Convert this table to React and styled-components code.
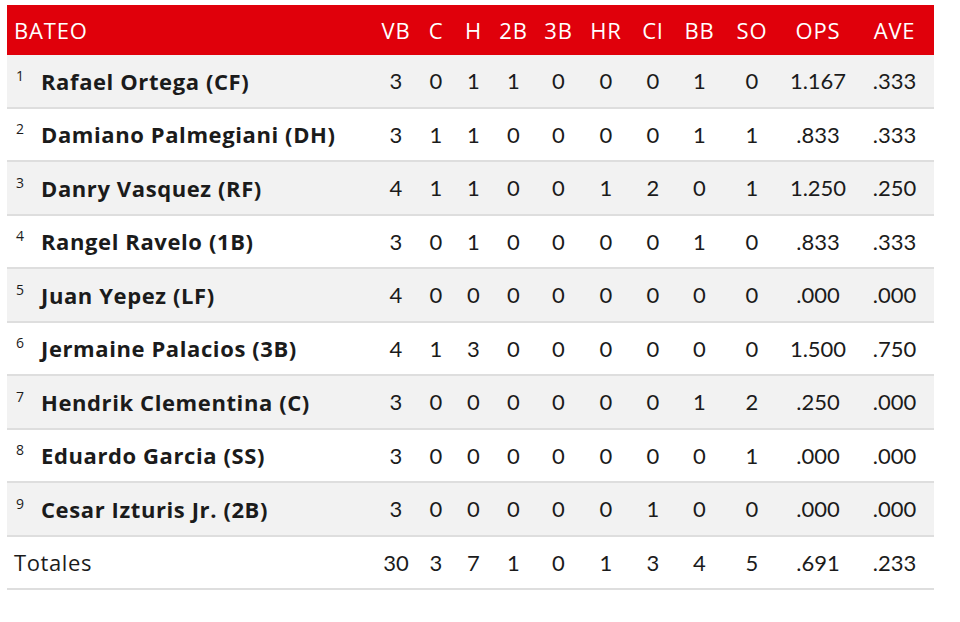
import React from "react";
import styled, { createGlobalStyle } from "styled-components";

const GlobalStyle = createGlobalStyle`
  body {
    margin: 0;
    background: #fff;
    font-family: "Open Sans", "Noto Sans", sans-serif;
    color: #1b1b1b;
  }
`

const COLS = "368px 42px 38px 37px 43px 47px 48px 46px 47px 58px 74px 79px";

const headers = ["VB", "C", "H", "2B", "3B", "HR", "CI", "BB", "SO", "OPS", "AVE"];

const players = [
  { n: 1, name: "Rafael Ortega (CF)", s: ["3", "0", "1", "1", "0", "0", "0", "1", "0", "1.167", ".333"] },
  { n: 2, name: "Damiano Palmegiani (DH)", s: ["3", "1", "1", "0", "0", "0", "0", "1", "1", ".833", ".333"] },
  { n: 3, name: "Danry Vasquez (RF)", s: ["4", "1", "1", "0", "0", "1", "2", "0", "1", "1.250", ".250"] },
  { n: 4, name: "Rangel Ravelo (1B)", s: ["3", "0", "1", "0", "0", "0", "0", "1", "0", ".833", ".333"] },
  { n: 5, name: "Juan Yepez (LF)", s: ["4", "0", "0", "0", "0", "0", "0", "0", "0", ".000", ".000"] },
  { n: 6, name: "Jermaine Palacios (3B)", s: ["4", "1", "3", "0", "0", "0", "0", "0", "0", "1.500", ".750"] },
  { n: 7, name: "Hendrik Clementina (C)", s: ["3", "0", "0", "0", "0", "0", "0", "1", "2", ".250", ".000"] },
  { n: 8, name: "Eduardo Garcia (SS)", s: ["3", "0", "0", "0", "0", "0", "0", "0", "1", ".000", ".000"] },
  { n: 9, name: "Cesar Izturis Jr. (2B)", s: ["3", "0", "0", "0", "0", "0", "1", "0", "0", ".000", ".000"] },
];

const totals = ["30", "3", "7", "1", "0", "1", "3", "4", "5", ".691", ".233"];

const App = () => {
  return (
    <>
      <GlobalStyle />
      <StyledTable>
        <HeaderRow>
          <HeaderName>BATEO</HeaderName>
          {headers.map((h) => (
            <HeaderCell key={h}>{h}</HeaderCell>
          ))}
        </HeaderRow>
        {players.map((p) => (
          <Row key={p.n} $alt={p.n % 2 === 1}>
            <NameCell>
              <Order>{p.n}</Order>
              <Name>{p.name}</Name>
            </NameCell>
            {p.s.map((v, i) => (
              <Cell key={i}>{v}</Cell>
            ))}
          </Row>
        ))}
        <Row>
          <TotalLabel>Totales</TotalLabel>
          {totals.map((v, i) => (
            <Cell key={i}>{v}</Cell>
          ))}
        </Row>
      </StyledTable>
    </>
  )
}

const StyledTable = styled.div`
  width: 927px;
  margin: 5px 0 0 7px;
`
const HeaderRow = styled.div`
  display: grid;
  grid-template-columns: ${COLS};
  height: 50px;
  align-items: center;
  background: #e0000b;
  color: #fff;
  font-size: 22px;
  letter-spacing: 0.8px;
`
const HeaderName = styled.div`
  padding-left: 7px;
`
const HeaderCell = styled.div`
  text-align: center;
  white-space: nowrap;
`
const Row = styled.div`
  display: grid;
  grid-template-columns: ${COLS};
  height: 51.5px;
  align-items: center;
  background: ${(props) => (props.$alt ? "#f2f2f2" : "#fff")};
  border-bottom: 2px solid #dedede;
  font-size: 22px;
`
const NameCell = styled.div`
  display: flex;
  align-items: flex-start;
  padding-left: 9px;
`
const Order = styled.span`
  width: 25px;
  font-size: 14px;
  line-height: 1;
  margin-top: -1px;
`
const Name = styled.span`
  font-weight: 700;
  line-height: 1;
  letter-spacing: 0.6px;
  white-space: nowrap;
`
const TotalLabel = styled.div`
  padding-left: 7px;
  letter-spacing: 0.6px;
`
const Cell = styled.div`
  text-align: center;
  font-family: "Lato", "Open Sans", sans-serif;
`

export default App;
